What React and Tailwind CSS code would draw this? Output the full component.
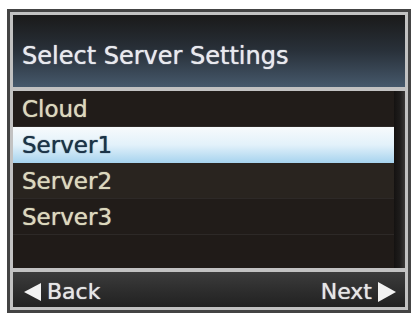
import React from "react";

const font = { fontFamily: '"DejaVu Sans", "Liberation Sans", sans-serif' };

function Row({ label, selected, alt }) {
  if (selected) {
    return (
      <div className="h-[36px] flex items-center pl-[9px] pt-[1px] bg-gradient-to-b from-[#f7fafc] via-[#e2f1fa] to-[#a6d3ee] text-[#1b3347] text-[23px] leading-none [text-shadow:0_0_1px_#1b3347]">
        {label}
      </div>
    );
  }
  return (
    <div
      className={
        "h-[36px] flex items-center pl-[9px] pt-[1px] text-[#dcd8bd] text-[23px] leading-none border-b border-[#2d2927] [text-shadow:0_0_1px_#dcd8bd] " +
        (alt ? "bg-[#29241f]" : "bg-[#211c19]")
      }
    >
      {label}
    </div>
  );
}

export default function App() {
  return (
    <div className="w-[415px] h-[315px] bg-white pt-[9px] pl-[7px]" style={font}>
      <div className="w-[404px] h-[304px] border-[3px] border-[#444444] bg-[#c2c2c2] p-[3px] flex flex-col gap-[4px]">
        <div className="h-[72px] shrink-0 flex items-center pl-[9px] pt-[10px] bg-gradient-to-b from-[#1a1a1a] via-[#29313a] to-[#46596c] text-[#e8e9ee] text-[24px] leading-none [text-shadow:0_0_1px_#e8e9ee]">
          Select Server Settings
        </div>
        <div className="flex-1 flex bg-[#201b18]">
          <div className="flex-1 flex flex-col">
            <Row label="Cloud" />
            <Row label="Server1" selected />
            <Row label="Server2" alt />
            <Row label="Server3" />
          </div>
          <div className="w-[11px] bg-gradient-to-r from-[#141211] via-[#1e1c1b] to-[#3a3837]" />
        </div>
        <div className="h-[35px] shrink-0 flex items-center justify-between pl-[11px] pr-[9px] pt-[4px] bg-gradient-to-b from-[#3c3c3c] via-[#2e2e2e] to-[#222222] text-[#e6e6e6] text-[22px] leading-none [text-shadow:0_0_1px_#e6e6e6]">
          <div className="flex items-center gap-[6px]">
            <svg width="17" height="18" viewBox="0 0 17 18">
              <polygon points="17,0 17,18 0,9" fill="#f2f2f2" />
            </svg>
            <span>Back</span>
          </div>
          <div className="flex items-center gap-[6px]">
            <span>Next</span>
            <svg width="18" height="20" viewBox="0 0 18 20">
              <polygon points="0,0 0,20 18,10" fill="#f2f2f2" />
            </svg>
          </div>
        </div>
      </div>
    </div>
  );
}
